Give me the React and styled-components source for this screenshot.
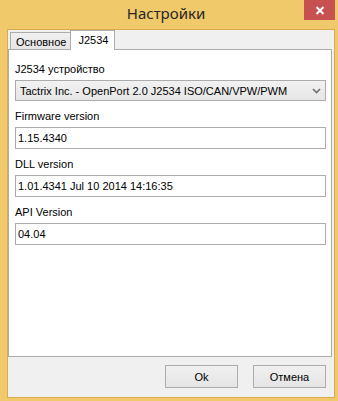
import React from 'react'
import styled, { createGlobalStyle } from 'styled-components'

const GlobalStyle = createGlobalStyle`
    html, body {
        margin: 0;
        padding: 0;
        background: #ffffff;
    }
    body {
        font-family: "Liberation Sans", Arial, sans-serif;
        font-size: 11px;
        color: #000000;
    }
`

const Window = styled.div`
    width: 338px;
    height: 401px;
    background: #f0c96b;
    display: flex;
    flex-direction: column;
    position: relative;
    box-sizing: border-box;
`

const TitleBar = styled.div`
    height: 29px;
    flex: none;
    display: flex;
    align-items: flex-start;
    justify-content: center;
`

const Title = styled.div`
    font-family: "Noto Sans", "Open Sans", sans-serif;
    font-size: 15px;
    line-height: 20px;
    padding-top: 3px;
    color: #262626;
    padding-right: 6px;
`

const CloseButton = styled.div`
    position: absolute;
    top: 0;
    left: 304px;
    width: 31px;
    height: 20px;
    background: #c75050;
    display: flex;
    align-items: center;
    justify-content: center;
`

const Client = styled.div`
    flex: 1;
    margin: 0 3px 3px 7px;
    border: 1px solid #d8ab4f;
    background: #f0f0f0;
    display: flex;
    flex-direction: column;
    min-height: 0;
`

const TabControl = styled.div`
    display: flex;
    flex-direction: column;
    margin-right: 2px;
    flex: 1;
    min-height: 0;
`

const TabStrip = styled.div`
    display: flex;
    align-items: flex-end;
    padding-left: 2px;
    height: 19px;
    position: relative;
    z-index: 1;
`

const Tab = styled.div`
    box-sizing: border-box;
    border: 1px solid #acacac;
    border-bottom: none;
    height: ${p => (p.$active ? '20px' : '17px')};
    margin-bottom: ${p => (p.$active ? '-1px' : '0')};
    margin-left: ${p => (p.$active ? '-1px' : '0')};
    padding: ${p => (p.$active ? '2px 6px 0 7px' : '2px 4px 0 5px')};
    background: ${p => (p.$active ? '#ffffff' : 'linear-gradient(#f0f0f0, #e5e5e5)')};
    line-height: 14px;
    white-space: nowrap;
`

const Panel = styled.div`
    flex: 1;
    background: #ffffff;
    border: 1px solid #acacac;
    padding: 12px 5px 0 6px;
    display: flex;
    flex-direction: column;
    gap: 8px;
`

const Field = styled.div`
    display: flex;
    flex-direction: column;
    gap: 4px;
`

const Label = styled.div`
    line-height: 14px;
    white-space: nowrap;
`

const TextBox = styled.div`
    box-sizing: border-box;
    height: 22px;
    border: 1px solid #acacac;
    background: #ffffff;
    padding: 0 2px;
    line-height: 20px;
    white-space: nowrap;
`

const Select = styled.div`
    box-sizing: border-box;
    height: 21px;
    border: 1px solid #acacac;
    background: linear-gradient(#f2f2f2, #e6e6e6);
    padding: 0 4px;
    display: flex;
    align-items: center;
    justify-content: space-between;
    white-space: nowrap;
`

const ButtonRow = styled.div`
    height: 40px;
    flex: none;
    display: flex;
    justify-content: flex-end;
    align-items: flex-start;
    gap: 15px;
    padding: 8px 8px 0 0;
    box-sizing: border-box;
`

const Button = styled.div`
    box-sizing: border-box;
    width: 73px;
    height: 23px;
    border: 1px solid #acacac;
    background: linear-gradient(#f0f0f0, #e5e5e5);
    display: flex;
    align-items: center;
    justify-content: center;
`

const Chevron = () => (
    <svg width="9" height="6" viewBox="0 0 9 6">
        <path d="M1 1 L4.5 4.5 L8 1" fill="none" stroke="#707070" strokeWidth="1.6" />
    </svg>
)

const App = () => {
    return (
        <>
            <GlobalStyle />
            <Window>
                <TitleBar>
                    <Title>Настройки</Title>
                </TitleBar>
                <CloseButton>
                    <svg width="10" height="9" viewBox="0 0 10 9">
                        <path d="M1.5 1 L8.5 8 M8.5 1 L1.5 8" stroke="#ffffff" strokeWidth="2" />
                    </svg>
                </CloseButton>
                <Client>
                    <TabControl>
                        <TabStrip>
                            <Tab>Основное</Tab>
                            <Tab $active>J2534</Tab>
                        </TabStrip>
                        <Panel>
                            <Field>
                                <Label>J2534 устройство</Label>
                                <Select>
                                    <span>Tactrix Inc. - OpenPort 2.0 J2534 ISO/CAN/VPW/PWM</span>
                                    <Chevron />
                                </Select>
                            </Field>
                            <Field>
                                <Label>Firmware version</Label>
                                <TextBox>1.15.4340</TextBox>
                            </Field>
                            <Field>
                                <Label>DLL version</Label>
                                <TextBox>1.01.4341 Jul 10 2014 14:16:35</TextBox>
                            </Field>
                            <Field>
                                <Label>API Version</Label>
                                <TextBox>04.04</TextBox>
                            </Field>
                        </Panel>
                    </TabControl>
                    <ButtonRow>
                        <Button>Ok</Button>
                        <Button>Отмена</Button>
                    </ButtonRow>
                </Client>
            </Window>
        </>
    )
}

export default App
